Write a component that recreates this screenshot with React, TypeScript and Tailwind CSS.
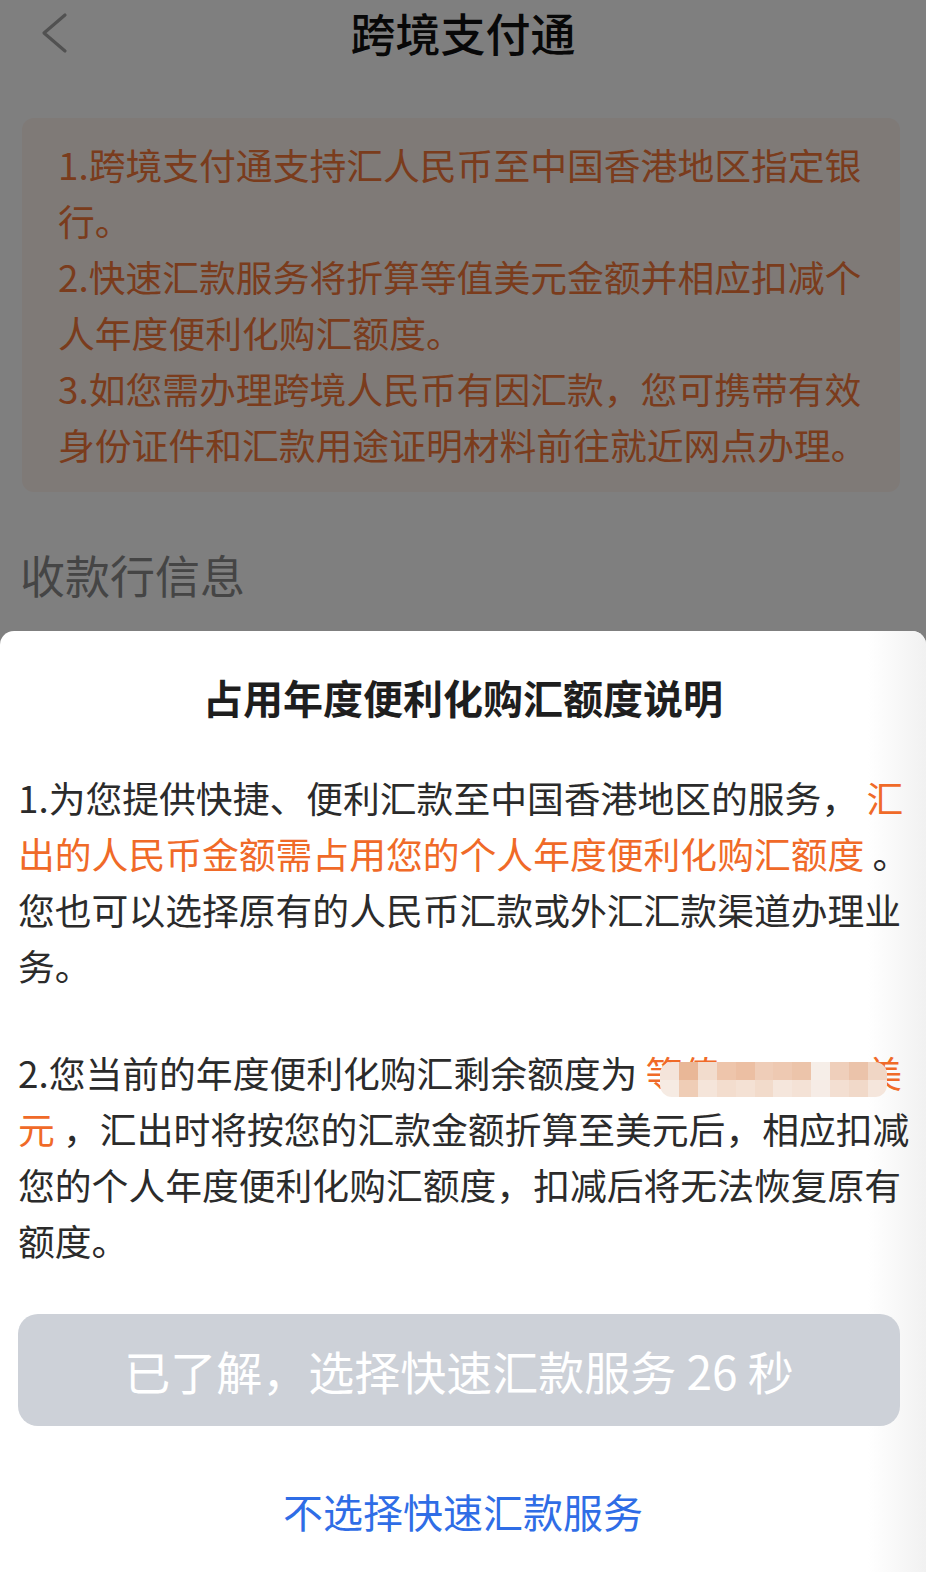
const orange = "text-[#f06a28]";

const mosaicTop = [
  "bg-[#f4e4da]",
  "bg-[#e9b797]",
  "bg-[#f2dccd]",
  "bg-[#eec5ab]",
  "bg-[#ecbfa3]",
  "bg-[#efcdb8]",
  "bg-[#eec9b2]",
  "bg-[#ecc4aa]",
  "bg-[#f6eee8]",
  "bg-[#efcfbb]",
  "bg-[#ebc3aa]",
  "bg-[#f0d6c5]",
];
const mosaicBottom = [
  "bg-[#f6ebe3]",
  "bg-[#efcdb6]",
  "bg-[#f5e5da]",
  "bg-[#f3ddce]",
  "bg-[#f4e1d4]",
  "bg-[#f2dbcb]",
  "bg-[#f5e6dc]",
  "bg-[#f4e2d6]",
  "bg-[#f6ece6]",
  "bg-[#f3dfd2]",
  "bg-[#f1d9c9]",
  "bg-[#f5e6dc]",
];

function Mosaic() {
  return (
    <div className="absolute left-[642px] top-[18px] grid h-[35px] w-[227px] grid-cols-12 overflow-hidden rounded-[12px]">
      {mosaicTop.map((c, i) => (
        <div key={"t" + i} className={c} />
      ))}
      {mosaicBottom.map((c, i) => (
        <div key={"b" + i} className={c} />
      ))}
    </div>
  );
}

export default function App() {
  return (
    <div className="relative h-[1572px] w-full overflow-hidden bg-[#fefefe] font-['Noto_Sans_CJK_SC','Noto_Sans',sans-serif]">
      {/* underlying page */}
      <div className="flex flex-col">
        <header className="grid h-[66px] grid-cols-[100px_1fr_100px] items-center">
          <div className="flex items-center pl-[38px]">
            <svg width="34" height="44" viewBox="0 0 34 44" fill="none">
              <polyline
                points="27,4 6,22 27,40"
                stroke="#a2a2a2"
                strokeWidth="3.2"
                strokeLinecap="round"
                strokeLinejoin="round"
              />
            </svg>
          </div>
          <h1 className="text-center text-[45px] font-medium leading-[66px] text-[#111]">
            跨境支付通
          </h1>
          <div />
        </header>

        <div className="ml-[22px] mr-[26px] mt-[52px] rounded-[12px] bg-[#fff4ee] pb-[20px] pl-[36px] pr-[10px] pt-[18px] text-[36.8px] leading-[56px] text-[#f5783a]">
          <div className="whitespace-nowrap">1.跨境支付通支持汇人民币至中国香港地区指定银</div>
          <div className="whitespace-nowrap">行。</div>
          <div className="whitespace-nowrap">2.快速汇款服务将折算等值美元金额并相应扣减个</div>
          <div className="whitespace-nowrap">人年度便利化购汇额度。</div>
          <div className="whitespace-nowrap">3.如您需办理跨境人民币有因汇款，您可携带有效</div>
          <div className="whitespace-nowrap">身份证件和汇款用途证明材料前往就近网点办理。</div>
        </div>

        <h2 className="ml-[20px] mt-[55px] text-[45px] leading-[56px] text-[#8a8a8a]">
          收款行信息
        </h2>
      </div>

      {/* dim overlay */}
      <div className="absolute inset-0 bg-black/50" />

      {/* bottom sheet */}
      <div className="absolute bottom-0 left-0 right-0 top-[631px] overflow-hidden rounded-t-[14px] bg-white">
        <div className="pointer-events-none absolute bottom-0 right-0 top-0 w-[58px] bg-linear-to-r from-white to-[#f1f1f1]" />
        <div className="relative flex flex-col">
          <h3 className="pt-[38px] text-center text-[40px] font-semibold leading-[56px] text-[#1e1e1e]">
            占用年度便利化购汇额度说明
          </h3>

          <div className="mt-[44px] px-[18px] text-[36.8px] leading-[56px] text-[#2b2b2b]">
            <div className="whitespace-nowrap">
              1.为您提供快捷、便利汇款至中国香港地区的服务， <span className={orange}>汇</span>
            </div>
            <div className="whitespace-nowrap">
              <span className={orange}>出的人民币金额需占用您的个人年度便利化购汇额度</span> 。
            </div>
            <div className="whitespace-nowrap">您也可以选择原有的人民币汇款或外汇汇款渠道办理业</div>
            <div className="whitespace-nowrap">务。</div>

            <div className="relative mt-[51px] whitespace-nowrap">
              2.您当前的年度便利化购汇剩余额度为{" "}
              <span className={orange}>
                等值<span className="inline-block w-[146px]" />美
              </span>
              <Mosaic />
            </div>
            <div className="whitespace-nowrap">
              <span className={orange}>元</span> ，汇出时将按您的汇款金额折算至美元后，相应扣减
            </div>
            <div className="whitespace-nowrap">您的个人年度便利化购汇额度，扣减后将无法恢复原有</div>
            <div className="whitespace-nowrap">额度。</div>
          </div>

          <button className="ml-[18px] mr-[26px] mt-[46px] flex h-[112px] items-center justify-center rounded-[20px] bg-[#cdd1d8] text-[46px] text-white">
            已了解，选择快速汇款服务 26 秒
          </button>

          <div className="mt-[57px] text-center text-[40px] leading-[56px] text-[#2f6de6]">
            不选择快速汇款服务
          </div>
        </div>
      </div>
    </div>
  );
}
